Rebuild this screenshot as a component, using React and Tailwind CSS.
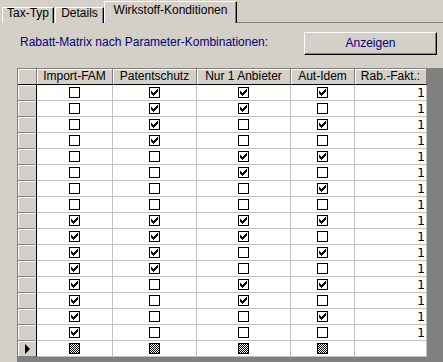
import React, { useId } from 'react';

// Rabatt-Matrix: all combinations of the four flags
const ROWS = [
  [0, 1, 1, 1], [0, 1, 1, 0], [0, 1, 0, 1], [0, 1, 0, 0],
  [0, 0, 1, 1], [0, 0, 1, 0], [0, 0, 0, 1], [0, 0, 0, 0],
  [1, 1, 1, 1], [1, 1, 1, 0], [1, 1, 0, 1], [1, 1, 0, 0],
  [1, 0, 1, 1], [1, 0, 1, 0], [1, 0, 0, 1], [1, 0, 0, 0],
];

const HEADERS = ['Import-FAM', 'Patentschutz', 'Nur 1 Anbieter', 'Aut-Idem', 'Rab.-Fakt.:'];

const CHECK = 'M6 0h1v1h-1z M5 1h2v1h-2z M0 2h1v1h-1z M4 2h3v1h-3z M0 3h2v1h-2z M3 3h3v1h-3z M0 4h5v1h-5z M1 5h3v1h-3z M2 6h1v1h-1z';

const CheckBox = ({ value }) => {
  const id = useId().replace(/:/g, '');
  return (
    <svg width="11" height="11" viewBox="0 0 11 11" shapeRendering="crispEdges" className="block">
      <defs>
        <pattern id={id} width="2" height="2" patternUnits="userSpaceOnUse">
          <rect width="2" height="2" fill="#fff" />
          <rect width="1" height="1" fill="#000" />
          <rect x="1" y="1" width="1" height="1" fill="#000" />
        </pattern>
      </defs>
      <rect x="0.5" y="0.5" width="10" height="10" fill={value === null ? `url(#${id})` : '#fff'} stroke="#000" />
      {value === 1 && <path transform="translate(2 2)" d={CHECK} fill="#000" />}
    </svg>
  );
};

const Tab = ({ label, active, className }) => (
  <div
    className={`flex justify-center border-l border-t border-l-white border-t-white border-r border-r-black shadow-[inset_-1px_0_#808080] leading-[10px] ${
      active ? 'h-[22px] pt-[3px]' : 'h-[16px]'
    } ${className}`}
  >
    {label}
  </div>
);

const SelectorCell = ({ current }) => (
  <div className="flex items-center justify-center bg-[#d4d0c8] border-r border-r-black border-b border-b-[#808080] shadow-[inset_1px_1px_#fff]">
    {current && (
      <svg width="6" height="10" viewBox="0 0 6 10" className="block ml-[2px]">
        <polygon points="0,0 5,5 0,10" fill="#000" />
      </svg>
    )}
  </div>
);

export default function App() {
  return (
    <div className="w-[443px] h-[362px] overflow-hidden bg-[#d4d0c8] text-[12px] text-black font-['Liberation_Sans',Arial,sans-serif]">
      {/* tab strip */}
      <div className="flex items-end h-[23px]">
        <div className="w-[2px]" />
        <Tab label="Tax-Typ" className="w-[52px]" />
        <div className="w-px" />
        <Tab label="Details" className="w-[49px]" />
        <Tab label="Wirkstoff-Konditionen" active className="w-[133px]" />
        <div className="flex-1 h-[23px] border-b border-[#808080]" />
      </div>

      {/* parameter line */}
      <div className="flex mt-[9px] h-[23px]">
        <span className="ml-[20px] mt-[3px] leading-[14px] text-[#000080]">
          Rabatt-Matrix nach Parameter-Kombinationen:
        </span>
        <button className="ml-auto mr-[6px] w-[133px] h-[23px] pb-[2px] flex items-center justify-center leading-[14px] text-[#000080] bg-[#d4d0c8] border border-t-white border-l-white border-r-black border-b-black shadow-[inset_-1px_-1px_#808080]">
          Anzeigen
        </button>
      </div>

      {/* datasheet */}
      <div className="mt-[13px] ml-[17px] h-[294px] bg-[#808080] border-l border-t border-[#808080]">
        <div className="grid w-fit grid-cols-[19px_76px_84px_94px_64px_72px] auto-rows-[16px] bg-white">
          <div className="bg-[#d4d0c8] border-r border-r-[#808080] border-b border-b-black shadow-[inset_1px_1px_#fff]" />
          {HEADERS.map((h) => (
            <div
              key={h}
              className="bg-[#d4d0c8] text-center leading-[15px] border-r border-r-[#808080] border-b border-b-black shadow-[inset_1px_1px_#fff] whitespace-nowrap overflow-hidden"
            >
              {h}
            </div>
          ))}

          {ROWS.map((row, i) => (
            <React.Fragment key={i}>
              <SelectorCell />
              {row.map((v, j) => (
                <div key={j} className="flex items-center justify-center border-r border-b border-[#c0c0c0]">
                  <CheckBox value={v} />
                </div>
              ))}
              <div className="text-right pr-px pt-px leading-[15px] border-r border-b border-[#c0c0c0] font-['DejaVu_Sans',sans-serif]">
                1
              </div>
            </React.Fragment>
          ))}

          {/* new record row */}
          <SelectorCell current />
          {[0, 1, 2, 3].map((j) => (
            <div key={j} className="flex items-center justify-center border-r border-b border-[#c0c0c0]">
              <CheckBox value={null} />
            </div>
          ))}
          <div className="border-r border-b border-[#c0c0c0]" />
        </div>
      </div>
    </div>
  );
}
